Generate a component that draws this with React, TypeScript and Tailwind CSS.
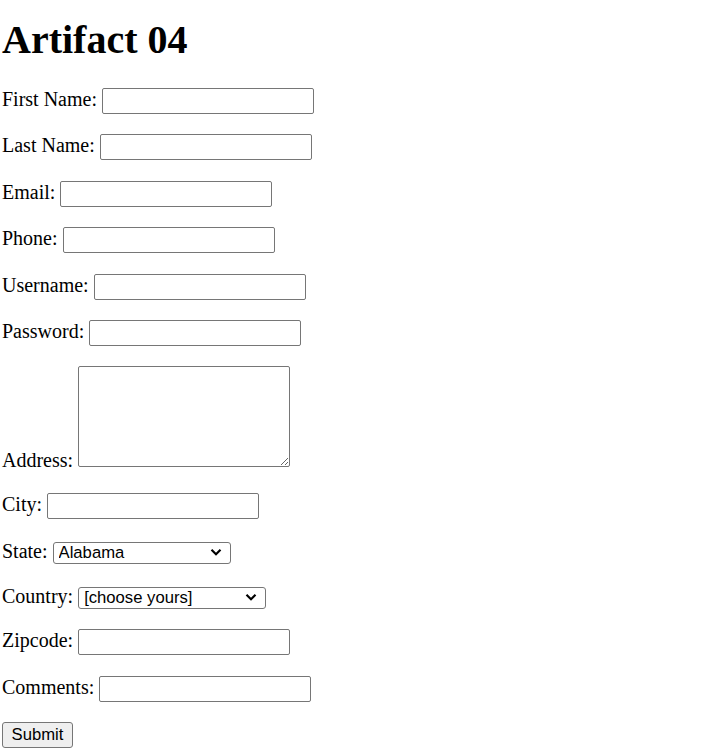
import React from "react";

const fields: { label: string; gap?: number }[] = [
  { label: "First Name:" },
  { label: "Last Name:" },
  { label: "Email:" },
  { label: "Phone:" },
  { label: "Username:" },
  { label: "Password:" },
];

const inputCls =
  "inline-block w-[212px] h-[26px] border border-[#767676] rounded-[2px] bg-white px-[2px] font-['Liberation_Sans'] text-[16.67px] align-baseline";

function Chevron() {
  return (
    <svg
      width="12"
      height="8"
      viewBox="0 0 12 8"
      className="pointer-events-none absolute right-[9px] top-1/2 -translate-y-1/2"
    >
      <path d="M1.5 1.8 6 6.2 10.5 1.8" fill="none" stroke="#000" strokeWidth="2.2" />
    </svg>
  );
}

function Select({ width, value }: { width: string; value: string }) {
  return (
    <span className={`relative inline-block align-baseline ${width}`}>
      <select
        defaultValue={value}
        className="w-full h-[22px] appearance-none border border-[#767676] rounded-[3px] bg-white pl-[5px] font-['Liberation_Sans'] text-[16.67px] leading-[20px] text-black"
      >
        <option>{value}</option>
      </select>
      <Chevron />
    </span>
  );
}

export default function App() {
  return (
    <div className="min-h-[753px] bg-white px-[2px] pt-[16px] font-['Liberation_Serif','Times_New_Roman',serif] text-[20px] leading-[normal] text-black">
      <h1 className="mb-[25px] text-[40px] font-bold leading-[normal]">Artifact 04</h1>
      <form onSubmit={(e) => e.preventDefault()}>
        {fields.map((f) => (
          <p key={f.label} className="my-[20.4px]">
            {f.label} <input type="text" className={inputCls} />
          </p>
        ))}
        <p className="my-[20.4px]">
          Address:{" "}
          <textarea className="inline-block w-[212px] h-[101px] resize border border-[#767676] rounded-[2px] bg-white align-baseline" />
        </p>
        <p className="my-[21px]">
          City: <input type="text" className={inputCls} />
        </p>
        <p className="my-[20.4px]">
          State: <Select width="w-[178px]" value="Alabama" />
        </p>
        <p className="my-[20.4px]">
          Country: <Select width="w-[188px]" value="[choose yours]" />
        </p>
        <p className="my-[20.4px]">
          Zipcode: <input type="text" className={inputCls} />
        </p>
        <p className="my-[20.4px]">
          Comments: <input type="text" className={inputCls} />
        </p>
        <p className="my-[20.4px]">
          <button
            type="submit"
            className="inline-block w-[71px] h-[26px] border border-[#767676] rounded-[3px] bg-[#efefef] font-['Liberation_Sans'] text-[16.67px] leading-[20px] text-black"
          >
            Submit
          </button>
        </p>
      </form>
    </div>
  );
}
